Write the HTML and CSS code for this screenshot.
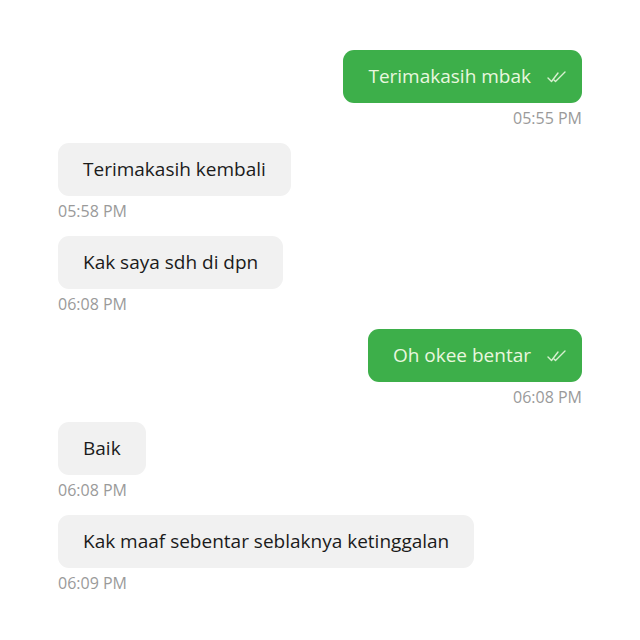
FILE: index.html
```html
<!DOCTYPE html>
<html>
<head>
<meta charset="utf-8">
<link rel="stylesheet" href="styles.css">
</head>
<body>
<div class="chat">
  <div class="msg sent">
    <div class="bubble">Terimakasih mbak <svg class="check" viewBox="0 0 20 14" width="20" height="14"><path d="M1 8 L4.5 11.5 L11 3" /><path d="M7 10 L8.5 11.5 L18 2" /></svg></div>
    <div class="time">05:55 PM</div>
  </div>
  <div class="msg recv">
    <div class="bubble">Terimakasih kembali</div>
    <div class="time">05:58 PM</div>
  </div>
  <div class="msg recv">
    <div class="bubble">Kak saya sdh di dpn</div>
    <div class="time">06:08 PM</div>
  </div>
  <div class="msg sent">
    <div class="bubble">Oh okee bentar <svg class="check" viewBox="0 0 20 14" width="20" height="14"><path d="M1 8 L4.5 11.5 L11 3" /><path d="M7 10 L8.5 11.5 L18 2" /></svg></div>
    <div class="time">06:08 PM</div>
  </div>
  <div class="msg recv">
    <div class="bubble">Baik</div>
    <div class="time">06:08 PM</div>
  </div>
  <div class="msg recv">
    <div class="bubble">Kak maaf sebentar seblaknya ketinggalan</div>
    <div class="time">06:09 PM</div>
  </div>
</div>
</body>
</html>
```

FILE: styles.css
```css
html, body {
  margin: 0;
  padding: 0;
  background: #ffffff;
}
.chat {
  padding: 50px 58px 0 58px;
  display: flex;
  flex-direction: column;
  gap: 15px;
  font-family: "Open Sans", "Liberation Sans", sans-serif;
}
.msg {
  display: flex;
  flex-direction: column;
}
.msg.sent {
  align-items: flex-end;
}
.msg.recv {
  align-items: flex-start;
}
.bubble {
  font-size: 19px;
  line-height: 25px;
  padding: 14px 25px;
  border-radius: 11px;
  display: flex;
  align-items: center;
  white-space: nowrap;
}
.recv .bubble {
  background: #f1f1f1;
  color: #1b1b1b;
}
.sent .bubble {
  background: #3daf4a;
  color: #e9f7df;
  padding: 14px 15px 14px 25px;
}
.check {
  margin-left: 16px;
  fill: none;
  stroke: #d8f0d0;
  stroke-width: 1.4;
  stroke-linecap: round;
  stroke-linejoin: round;
}
.time {
  margin-top: 5px;
  font-size: 16px;
  line-height: 20px;
  color: #9a9a9a;
}
```
